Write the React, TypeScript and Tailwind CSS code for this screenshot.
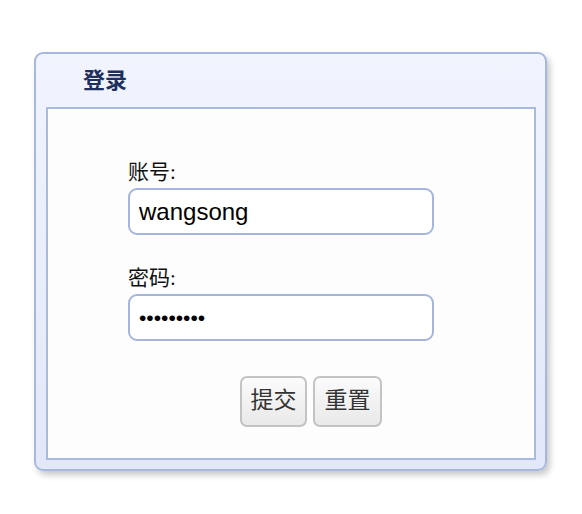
export default function App() {
  return (
    <div className="w-[582px] h-[514px] bg-white pl-[34px] pt-[52px]">
      <div className="w-[513px] h-[419px] flex flex-col rounded-[9px] border-2 border-[#a7b8dd] bg-gradient-to-b from-[#f1f4fd] to-[#e2e8f9] shadow-[3px_4px_6px_rgba(0,0,0,0.22)]">
        <div className="h-[53px] flex items-center pl-[47px]">
          <span className="font-['Liberation_Serif','Noto_Sans_CJK_SC',serif] text-[22px] font-bold text-[#1e2f5e]">
            登录
          </span>
        </div>
        <div className="ml-[10px] mr-[9px] h-[353px] border-2 border-[#a9badf] bg-[#fdfdfd] pl-[80px] pt-[51px] font-['Liberation_Serif','Noto_Sans_CJK_SC',serif]">
          <label className="block text-[21px] leading-[24px] text-[#111]">账号:</label>
          <input
            readOnly
            value="wangsong"
            className="mt-[4px] block w-[306px] h-[47px] rounded-[9px] border-2 border-[#a5b6da] bg-white pl-[9px] font-['Liberation_Sans',sans-serif] text-[24px] text-black outline-none"
          />
          <label className="mt-[31px] block text-[21px] leading-[24px] text-[#111]">密码:</label>
          <input
            readOnly
            type="password"
            value="123456789"
            className="mt-[4px] block w-[306px] h-[47px] rounded-[9px] border-2 border-[#a5b6da] bg-white pl-[9px] font-['Liberation_Sans',sans-serif] text-[21px] text-black outline-none"
          />
          <div className="mt-[35px] ml-[112px] flex gap-[6px]">
            <button className="w-[67px] h-[51px] rounded-[7px] border-2 border-[#c3c3c3] bg-gradient-to-b from-[#fbfbfb] to-[#e9e9e9] text-[23px] text-[#333]">
              提交
            </button>
            <button className="w-[69px] h-[51px] rounded-[7px] border-2 border-[#c3c3c3] bg-gradient-to-b from-[#fbfbfb] to-[#e9e9e9] text-[23px] text-[#333]">
              重置
            </button>
          </div>
        </div>
      </div>
    </div>
  );
}
